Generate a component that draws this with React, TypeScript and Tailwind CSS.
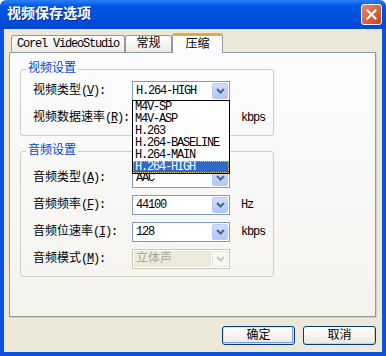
import React from 'react';

const FONT = "font-['Liberation_Mono','Noto_Sans_CJK_SC',monospace]";
const LATIN = 'text-[12px] tracking-[-1.2px]';

function Chevron({ color }: { color: string }) {
  return (
    <svg width="9" height="6" viewBox="0 0 9 6">
      <path d="M1 1 L4.5 4.5 L8 1" fill="none" stroke={color} strokeWidth="2" />
    </svg>
  );
}

function Combo({ value, disabled, cjk }: { value: string; disabled?: boolean; cjk?: boolean }) {
  return (
    <div
      className={`flex h-[20px] w-[98px] items-center border p-[1px] ${
        disabled ? 'border-[#c9c7ba] bg-white' : 'border-[#7f9db9] bg-white'
      }`}
    >
      <div
        className={`flex h-full flex-1 items-center pl-[2px] ${disabled ? 'bg-[#ebeadb] text-[#aca899]' : ''} ${
          cjk ? 'text-[12px]' : LATIN
        }`}
      >
        {value}
      </div>
      <div
        className={`ml-[1px] flex h-full w-[16px] items-center justify-center rounded-[2px] border ${
          disabled
            ? 'border-[#e8e7e0] bg-[#f7f7f4]'
            : 'border-[#b6c9f7] bg-gradient-to-b from-[#d2defb] to-[#b0c6f7]'
        }`}
      >
        <Chevron color={disabled ? '#c9c7ba' : '#4d6185'} />
      </div>
    </div>
  );
}

function Label({ text, hotkey }: { text: string; hotkey: string }) {
  return (
    <div className="w-[99px] shrink-0 text-[12px]">
      {text}
      <span className={LATIN}>
        (<span className="underline">{hotkey}</span>):
      </span>
    </div>
  );
}

function Row({ children }: { children: React.ReactNode }) {
  return <div className="flex h-[20px] items-center">{children}</div>;
}

const CODECS = ['M4V-SP', 'M4V-ASP', 'H.263', 'H.264-BASELINE', 'H.264-MAIN', 'H.264-HIGH'];

function CodecList() {
  return (
    <div className="absolute left-0 top-[19px] z-10 w-[98px] border border-black bg-white">
      {CODECS.map((c) => (
        <div
          key={c}
          className={`flex h-[12px] items-center overflow-hidden pl-[2px] leading-[12px] ${LATIN} ${
            c === 'H.264-HIGH'
              ? 'bg-[#316ac5] text-white outline-1 -outline-offset-1 outline-dotted outline-[#e8c872]'
              : ''
          }`}
        >
          {c}
        </div>
      ))}
    </div>
  );
}

function Group({ title, className, children }: { title: string; className: string; children: React.ReactNode }) {
  return (
    <fieldset className={`w-[254px] rounded-[3px] border border-[#d0d0bf] pl-[5px] ${className}`}>
      <legend className="px-[2px] text-[12px] leading-[14px] text-[#0046d5]">{title}</legend>
      <div className="flex flex-col gap-[7px] pl-[7px]">{children}</div>
    </fieldset>
  );
}

function Unit({ text }: { text: string }) {
  return <span className={`ml-[11px] ${LATIN}`}>{text}</span>;
}

function Tab({ label, width, active, latin }: { label: string; width: string; active?: boolean; latin?: boolean }) {
  if (active) {
    return (
      <div
        className={`relative z-10 -mb-px flex h-[20px] ${width} items-center justify-center rounded-t-[3px] border-x border-t-[3px] border-x-[#919b9c] border-t-[#f0a63a] bg-[#fcfcfe] text-[12px]`}
      >
        {label}
      </div>
    );
  }
  return (
    <div
      className={`flex h-[17px] ${width} items-center justify-center rounded-t-[3px] border border-b-0 border-[#919b9c] bg-gradient-to-b from-white to-[#ecebe5] ${
        latin ? LATIN : 'text-[12px]'
      }`}
    >
      {label}
    </div>
  );
}

function Button({ label, isDefault }: { label: string; isDefault?: boolean }) {
  return (
    <div
      className={`flex h-[19px] w-[73px] items-center justify-center rounded-[3px] border border-[#003c74] bg-gradient-to-b from-white to-[#ebe9e1] text-[12px] ${
        isDefault ? 'shadow-[inset_0_0_0_1px_#cee7ff,inset_-1px_-1px_0_1px_#7a9de6]' : 'shadow-[inset_-1px_-1px_0_0_#d6d0c5]'
      }`}
    >
      {label}
    </div>
  );
}

export default function App() {
  return (
    <div className={`flex h-[356px] w-[386px] flex-col ${FONT} text-black`}>
      <div className="flex h-[29px] shrink-0 items-center justify-between rounded-t-[6px] bg-gradient-to-b from-[#2f7ff5] via-[#0058e8] via-20% to-[#0047d4] pl-[7px] pr-[4px]">
        <span className="text-[14px] font-bold text-white [text-shadow:1px_1px_0_#0a2f8c]">视频保存选项</span>
        <div className="flex h-[21px] w-[21px] items-center justify-center rounded-[3px] border border-white bg-gradient-to-br from-[#e8866a] to-[#c8431d]">
          <svg width="11" height="11" viewBox="0 0 11 11">
            <path d="M1.5 1.5 L9.5 9.5 M9.5 1.5 L1.5 9.5" stroke="white" strokeWidth="2" strokeLinecap="square" />
          </svg>
        </div>
      </div>

      <div className="flex flex-1 flex-col border-x-4 border-b-4 border-[#0a52e0] bg-[#ece9d8] pl-[5px] pr-[6px] pt-[4px]">
        <div className="flex h-[19px] items-end pl-[2px]">
          <Tab label="Corel VideoStudio" width="w-[114px]" latin />
          <Tab label="常规" width="w-[47px]" />
          <Tab label="压缩" width="w-[51px]" active />
        </div>

        <div className="flex h-[265px] flex-col border border-[#919b9c] bg-gradient-to-b from-[#fcfcfe] to-[#f4f3ee] pl-[10px] pt-[9px] shadow-[1px_1px_0_#d0cebf]">
          <Group title="视频设置" className="pb-[7px] pt-[5px]">
            <Row>
              <Label text="视频类型" hotkey="V" />
              <div className="relative">
                <Combo value="H.264-HIGH" />
                <CodecList />
              </div>
            </Row>
            <Row>
              <Label text="视频数据速率" hotkey="R" />
              <Combo value="" />
              <Unit text="kbps" />
            </Row>
          </Group>

          <Group title="音频设置" className="mt-[8px] pb-[7px] pt-[10px]">
            <Row>
              <Label text="音频类型" hotkey="A" />
              <Combo value="AAC" />
            </Row>
            <Row>
              <Label text="音频频率" hotkey="F" />
              <Combo value="44100" />
              <Unit text="Hz" />
            </Row>
            <Row>
              <Label text="音频位速率" hotkey="I" />
              <Combo value="128" />
              <Unit text="kbps" />
            </Row>
            <Row>
              <Label text="音频模式" hotkey="M" />
              <Combo value="立体声" disabled cjk />
            </Row>
          </Group>
        </div>

        <div className="mt-[9px] flex justify-end gap-[8px]">
          <Button label="确定" isDefault />
          <Button label="取消" />
        </div>
      </div>
    </div>
  );
}
